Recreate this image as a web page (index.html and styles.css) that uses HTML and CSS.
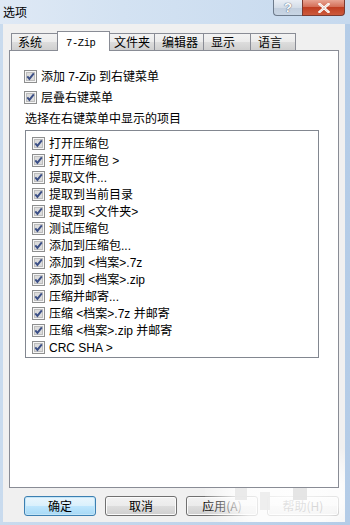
FILE: index.html
```html
<!DOCTYPE html>
<html lang="zh-CN">
<head>
<meta charset="utf-8">
<title>选项</title>
<link rel="stylesheet" href="styles.css">
</head>
<body>
<div class="window">
  <div class="titlebar">
    <span class="title">选项</span>
    <div class="caption-btns">
      <div class="cbtn help">?</div>
      <div class="cbtn close">
        <svg width="12" height="10" viewBox="0 0 12 10"><path d="M1.5 1 L10.5 9 M10.5 1 L1.5 9" stroke="#fff" stroke-width="2.4" stroke-linecap="square"/><path d="M1.5 1 L10.5 9 M10.5 1 L1.5 9" stroke="#7a2a1c" stroke-width="0.6" opacity="0.35"/></svg>
      </div>
    </div>
  </div>
  <div class="client">
    <div class="tabs">
      <div class="tab t1">系统</div>
      <div class="tab sel"><span class="mono">7-Zip</span></div>
      <div class="tab t3">文件夹</div>
      <div class="tab t4">编辑器</div>
      <div class="tab t5">显示</div>
      <div class="tab t6">语言</div>
    </div>
    <div class="panel">
      <div class="opt"><svg class="cb" width="13" height="13" viewBox="0 0 13 13"><rect x="0.5" y="0.5" width="12" height="12" fill="#f6f6f6" stroke="#8e8f8f"/><rect x="2.5" y="2.5" width="8" height="8" fill="#dcdcdc" stroke="#bdbdbd"/><path d="M3.3 6.4 L5.4 8.9 L9.8 3.3" fill="none" stroke="#3b4f86" stroke-width="1.9"/></svg><span>添加 7-Zip 到右键菜单</span></div>
      <div class="opt"><svg class="cb" width="13" height="13" viewBox="0 0 13 13"><rect x="0.5" y="0.5" width="12" height="12" fill="#f6f6f6" stroke="#8e8f8f"/><rect x="2.5" y="2.5" width="8" height="8" fill="#dcdcdc" stroke="#bdbdbd"/><path d="M3.3 6.4 L5.4 8.9 L9.8 3.3" fill="none" stroke="#3b4f86" stroke-width="1.9"/></svg><span>层叠右键菜单</span></div>
      <div class="opt label">选择在右键菜单中显示的项目</div>
      <div class="listbox">
        <div class="item"><svg class="cb" width="13" height="13" viewBox="0 0 13 13"><rect x="0.5" y="0.5" width="12" height="12" fill="#f6f6f6" stroke="#8e8f8f"/><rect x="2.5" y="2.5" width="8" height="8" fill="#dcdcdc" stroke="#bdbdbd"/><path d="M3.3 6.4 L5.4 8.9 L9.8 3.3" fill="none" stroke="#3b4f86" stroke-width="1.9"/></svg><span>打开压缩包</span></div>
        <div class="item"><svg class="cb" width="13" height="13" viewBox="0 0 13 13"><rect x="0.5" y="0.5" width="12" height="12" fill="#f6f6f6" stroke="#8e8f8f"/><rect x="2.5" y="2.5" width="8" height="8" fill="#dcdcdc" stroke="#bdbdbd"/><path d="M3.3 6.4 L5.4 8.9 L9.8 3.3" fill="none" stroke="#3b4f86" stroke-width="1.9"/></svg><span>打开压缩包 &gt;</span></div>
        <div class="item"><svg class="cb" width="13" height="13" viewBox="0 0 13 13"><rect x="0.5" y="0.5" width="12" height="12" fill="#f6f6f6" stroke="#8e8f8f"/><rect x="2.5" y="2.5" width="8" height="8" fill="#dcdcdc" stroke="#bdbdbd"/><path d="M3.3 6.4 L5.4 8.9 L9.8 3.3" fill="none" stroke="#3b4f86" stroke-width="1.9"/></svg><span>提取文件...</span></div>
        <div class="item"><svg class="cb" width="13" height="13" viewBox="0 0 13 13"><rect x="0.5" y="0.5" width="12" height="12" fill="#f6f6f6" stroke="#8e8f8f"/><rect x="2.5" y="2.5" width="8" height="8" fill="#dcdcdc" stroke="#bdbdbd"/><path d="M3.3 6.4 L5.4 8.9 L9.8 3.3" fill="none" stroke="#3b4f86" stroke-width="1.9"/></svg><span>提取到当前目录</span></div>
        <div class="item"><svg class="cb" width="13" height="13" viewBox="0 0 13 13"><rect x="0.5" y="0.5" width="12" height="12" fill="#f6f6f6" stroke="#8e8f8f"/><rect x="2.5" y="2.5" width="8" height="8" fill="#dcdcdc" stroke="#bdbdbd"/><path d="M3.3 6.4 L5.4 8.9 L9.8 3.3" fill="none" stroke="#3b4f86" stroke-width="1.9"/></svg><span>提取到 &lt;文件夹&gt;</span></div>
        <div class="item"><svg class="cb" width="13" height="13" viewBox="0 0 13 13"><rect x="0.5" y="0.5" width="12" height="12" fill="#f6f6f6" stroke="#8e8f8f"/><rect x="2.5" y="2.5" width="8" height="8" fill="#dcdcdc" stroke="#bdbdbd"/><path d="M3.3 6.4 L5.4 8.9 L9.8 3.3" fill="none" stroke="#3b4f86" stroke-width="1.9"/></svg><span>测试压缩包</span></div>
        <div class="item"><svg class="cb" width="13" height="13" viewBox="0 0 13 13"><rect x="0.5" y="0.5" width="12" height="12" fill="#f6f6f6" stroke="#8e8f8f"/><rect x="2.5" y="2.5" width="8" height="8" fill="#dcdcdc" stroke="#bdbdbd"/><path d="M3.3 6.4 L5.4 8.9 L9.8 3.3" fill="none" stroke="#3b4f86" stroke-width="1.9"/></svg><span>添加到压缩包...</span></div>
        <div class="item"><svg class="cb" width="13" height="13" viewBox="0 0 13 13"><rect x="0.5" y="0.5" width="12" height="12" fill="#f6f6f6" stroke="#8e8f8f"/><rect x="2.5" y="2.5" width="8" height="8" fill="#dcdcdc" stroke="#bdbdbd"/><path d="M3.3 6.4 L5.4 8.9 L9.8 3.3" fill="none" stroke="#3b4f86" stroke-width="1.9"/></svg><span>添加到 &lt;档案&gt;.7z</span></div>
        <div class="item"><svg class="cb" width="13" height="13" viewBox="0 0 13 13"><rect x="0.5" y="0.5" width="12" height="12" fill="#f6f6f6" stroke="#8e8f8f"/><rect x="2.5" y="2.5" width="8" height="8" fill="#dcdcdc" stroke="#bdbdbd"/><path d="M3.3 6.4 L5.4 8.9 L9.8 3.3" fill="none" stroke="#3b4f86" stroke-width="1.9"/></svg><span>添加到 &lt;档案&gt;.zip</span></div>
        <div class="item"><svg class="cb" width="13" height="13" viewBox="0 0 13 13"><rect x="0.5" y="0.5" width="12" height="12" fill="#f6f6f6" stroke="#8e8f8f"/><rect x="2.5" y="2.5" width="8" height="8" fill="#dcdcdc" stroke="#bdbdbd"/><path d="M3.3 6.4 L5.4 8.9 L9.8 3.3" fill="none" stroke="#3b4f86" stroke-width="1.9"/></svg><span>压缩并邮寄...</span></div>
        <div class="item"><svg class="cb" width="13" height="13" viewBox="0 0 13 13"><rect x="0.5" y="0.5" width="12" height="12" fill="#f6f6f6" stroke="#8e8f8f"/><rect x="2.5" y="2.5" width="8" height="8" fill="#dcdcdc" stroke="#bdbdbd"/><path d="M3.3 6.4 L5.4 8.9 L9.8 3.3" fill="none" stroke="#3b4f86" stroke-width="1.9"/></svg><span>压缩 &lt;档案&gt;.7z 并邮寄</span></div>
        <div class="item"><svg class="cb" width="13" height="13" viewBox="0 0 13 13"><rect x="0.5" y="0.5" width="12" height="12" fill="#f6f6f6" stroke="#8e8f8f"/><rect x="2.5" y="2.5" width="8" height="8" fill="#dcdcdc" stroke="#bdbdbd"/><path d="M3.3 6.4 L5.4 8.9 L9.8 3.3" fill="none" stroke="#3b4f86" stroke-width="1.9"/></svg><span>压缩 &lt;档案&gt;.zip 并邮寄</span></div>
        <div class="item"><svg class="cb" width="13" height="13" viewBox="0 0 13 13"><rect x="0.5" y="0.5" width="12" height="12" fill="#f6f6f6" stroke="#8e8f8f"/><rect x="2.5" y="2.5" width="8" height="8" fill="#dcdcdc" stroke="#bdbdbd"/><path d="M3.3 6.4 L5.4 8.9 L9.8 3.3" fill="none" stroke="#3b4f86" stroke-width="1.9"/></svg><span>CRC SHA &gt;</span></div>
      </div>
    </div>
    <div class="buttons">
      <div class="btn default">确定</div>
      <div class="btn">取消</div>
      <div class="btn">应用(A)</div>
      <div class="btn">帮助(H)</div>
    </div>
  </div>
</div>
<div class="watermark">
  <div class="wm-glow"></div>
  <div class="blk b1"></div>
  <div class="blk b2"></div>
  <div class="blk b3"></div>
  <div class="blk b4"></div>
  <div class="blk b5"></div>
</div>
</body>
</html>
```

FILE: styles.css
```css
* { box-sizing: border-box; }
html, body { margin: 0; padding: 0; }
body {
  width: 350px;
  height: 525px;
  overflow: hidden;
  position: relative;
  font-family: "Liberation Sans", "Noto Sans CJK SC", sans-serif;
  font-size: 12px;
  color: #000;
}
.window {
  width: 350px;
  height: 525px;
  background: linear-gradient(to right, #c9dbee 0%, #bed3ea 60%, #b4cce7 100%);
  display: flex;
  flex-direction: column;
}
.titlebar {
  height: 24px;
  display: flex;
  justify-content: space-between;
  align-items: flex-start;
  padding-right: 5px;
  background: linear-gradient(to right, #dfe9f5 0%, #d3e2f2 35%, #c6d9ee 100%);
}
.title {
  padding-left: 3px;
  line-height: 24px;
  font-size: 12px;
  font-family: "Noto Sans CJK SC", sans-serif;
}
.caption-btns {
  display: flex;
  height: 16px;
}
.cbtn {
  height: 16px;
  display: flex;
  align-items: center;
  justify-content: center;
  border: 1px solid #6d7b8c;
  border-top: none;
}
.help {
  width: 29px;
  border-radius: 0 0 0 4px;
  background: linear-gradient(to bottom, #e9eef5 0%, #d4dde8 50%, #c2cedd 51%, #c8d5e4 100%);
  color: #fff;
  font-weight: bold;
  font-size: 13px;
  text-shadow: 0 0 1px #56647a, 0 0 1px #56647a;
  border-right: none;
}
.close {
  width: 43px;
  border-radius: 0 0 4px 0;
  border-color: #7b3a30;
  background: linear-gradient(to bottom, #e8a493 0%, #d46f58 45%, #c03e22 50%, #cc5a3c 100%);
}
.client {
  margin-left: 3px;
  width: 342px;
  height: 498px;
  background: #f0f0f0;
  padding-top: 7px;
}
.tabs {
  display: flex;
  align-items: flex-end;
  height: 20px;
  margin-left: 8px;
  position: relative;
  z-index: 2;
}
.tab {
  height: 17px;
  margin-bottom: 1px;
  border: 1px solid #898c95;
  border-bottom: none;
  margin-right: -1px;
  background: linear-gradient(to bottom, #f3f3f3 0%, #ebebeb 50%, #dddddd 51%, #cfcfcf 100%);
  font-family: "Noto Sans CJK SC", sans-serif;
  font-size: 12px;
  line-height: 16px;
  padding-left: 6px;
  white-space: nowrap;
}
.t1 { width: 49px; }
.t3 { width: 47px; padding-left: 5px; }
.t4 { width: 50px; padding-left: 7px; }
.t5 { width: 48px; padding-left: 7px; }
.t6 { width: 46px; padding-left: 7px; }
.tab.sel {
  height: 20px;
  margin-bottom: 0;
  width: 53px;
  margin-left: -2px;
  margin-right: -2px;
  background: #fff;
  position: relative;
  z-index: 3;
  padding-left: 8px;
  line-height: 17px;
}
.mono {
  font-family: "Liberation Mono", monospace;
  font-size: 10.5px;
  letter-spacing: -0.4px;
}
.panel {
  margin: -1px 0 0 6px;
  width: 330px;
  height: 438px;
  border: 1px solid #898c95;
  background: #fff;
  padding: 15px 0 0 14px;
  position: relative;
  z-index: 1;
}
.opt {
  height: 21px;
  display: flex;
  align-items: center;
  gap: 4px;
  font-family: "Liberation Sans", "Noto Sans CJK SC", sans-serif;
  font-size: 12px;
  line-height: 14px;
}
.opt.label { padding-left: 1px; }
.cb { flex: none; display: block; }
.listbox {
  margin: 1px 0 0 1px;
  width: 294px;
  border: 1px solid #828790;
  padding: 4px 0 1px 6px;
}
.item {
  height: 17px;
  display: flex;
  align-items: center;
  gap: 4px;
  font-size: 12px;
  line-height: 14px;
}
.buttons {
  display: flex;
  gap: 9px;
  padding-left: 21px;
  margin-top: 8px;
}
.btn {
  width: 72px;
  height: 20px;
  border: 1px solid #707070;
  border-radius: 3px;
  background: linear-gradient(to bottom, #f2f2f2 0%, #ebebeb 50%, #dddddd 51%, #cfcfcf 100%);
  box-shadow: inset 0 0 0 1px #fbfbfb;
  display: flex;
  align-items: center;
  justify-content: center;
  font-family: "Noto Sans CJK SC", sans-serif;
  font-size: 12px;
  line-height: 14px;
}
.btn.default {
  border-color: #3c7fb1;
  background: linear-gradient(to bottom, #eaf6fd 0%, #d9f0fc 50%, #bee6fd 51%, #a7d9f5 100%);
  box-shadow: inset 0 0 0 1px #c3e5f7;
}
.watermark {
  position: absolute;
  left: 205px;
  top: 440px;
  width: 140px;
  height: 82px;
  pointer-events: none;
}
.wm-glow {
  position: absolute;
  inset: 0;
  background: radial-gradient(ellipse at 60% 65%, rgba(255,255,255,0.92) 0%, rgba(255,255,255,0.8) 45%, rgba(255,255,255,0) 75%);
}
.blk { position: absolute; }
.b1 { left: 30px; top: 48px; width: 12px; height: 12px; background: rgba(232,232,232,0.9); }
.b2 { left: 65px; top: 30px; width: 10px; height: 10px; background: rgba(228,228,228,0.9); }
.b3 { left: 55px; top: 52px; width: 10px; height: 18px; background: rgba(236,236,236,0.9); }
.b4 { left: 88px; top: 48px; width: 14px; height: 12px; background: rgba(226,226,226,0.9); }
.b5 { left: 110px; top: 35px; width: 16px; height: 14px; background: rgba(255,255,255,0.85); }
```
